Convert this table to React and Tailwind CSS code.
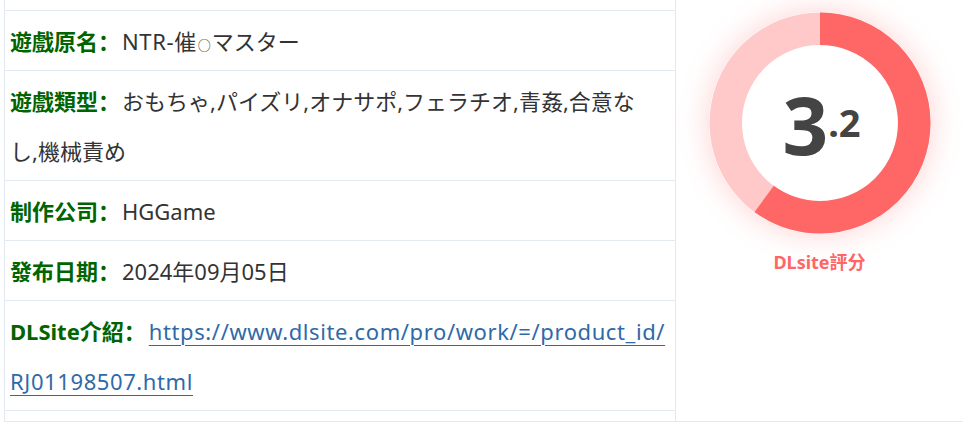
const FONT = { fontFamily: '"Noto Sans", "Noto Sans CJK SC", sans-serif' };

const rows = [
  { label: "遊戲原名：", value: ["NTR-催", "○", "マスター"], mixed: true },
  { label: "遊戲類型：", value: ["おもちゃ,パイズリ,オナサポ,フェラチオ,青姦,合意な", "し,機械責め"] },
  { label: "制作公司：", value: "HGGame" },
  { label: "發布日期：", value: "2024年09月05日" },
  {
    label: "DLSite介紹：",
    link: ["https://www.dlsite.com/pro/work/=/product_id/", "RJ01198507.html"],
  },
];

function ScoreRing({ percent }) {
  const r = 94.25;
  const c = 2 * Math.PI * r;
  return (
    <div className="rounded-full shadow-[0_0_30px_rgba(255,102,102,0.3)]">
      <svg width="222" height="222" viewBox="0 0 222 222" className="block">
        <circle cx="111" cy="111" r={r} fill="none" stroke="#ffc9c9" strokeWidth="32.5" />
        <circle
          cx="111"
          cy="111"
          r={r}
          fill="none"
          stroke="#ff6666"
          strokeWidth="32.5"
          strokeDasharray={c * percent + " " + c}
          transform="rotate(-90 111 111)"
        />
      </svg>
    </div>
  );
}

function Value({ row }) {
  if (row.link) {
    return (
      <a href="#" className="ml-[3px] text-[#2f6aa8] underline underline-offset-[5px] decoration-1 tracking-[0.6px]">
        {row.link[0]}
        <br />
        {row.link[1]}
      </a>
    );
  }
  if (row.mixed) {
    // the circle in the title is drawn small in the original
    return (
      <span className="ml-[2px]">
        <span className="tracking-[0.6px]">{row.value[0]}</span>
        <span className="text-[13px] leading-none px-[1px]">{row.value[1]}</span>
        {row.value[2]}
      </span>
    );
  }
  if (Array.isArray(row.value)) {
    return (
      <span className="ml-[2px]">
        {row.value[0]}
        <br />
        {row.value[1]}
      </span>
    );
  }
  return <span className="ml-[2px]">{row.value}</span>;
}

export default function App() {
  return (
    <div className="bg-white w-[963px] h-[425px] pl-[4px]" style={FONT}>
      <div className="flex border-l border-b border-[#e1eaf2]">
        <div className="w-[671px] border-r border-[#e1eaf2] pb-[10px]">
          <div className="h-[11px] border-b border-[#e1eaf2]" />
          {rows.map(function (row, i) {
            return (
              <div key={i} className="border-b border-[#e1eaf2] px-[5px] py-[4.5px] text-[22px] leading-[50px] text-[#333]">
                <span className="font-bold text-[#006400]">{row.label}</span>
                <Value row={row} />
              </div>
            );
          })}
        </div>
        <div className="flex-1 flex flex-col items-center pt-[12px]">
          <div className="relative">
            <ScoreRing percent={0.6} />
            <div className="absolute inset-0 flex items-center justify-center pl-[4px] pt-[2px] text-[#444] font-bold">
              <span className="text-[80px] leading-none">3</span>
              <span className="text-[38px] leading-none mt-[-4px]">.2</span>
            </div>
          </div>
          <div className="mt-[15px] text-[18px] font-bold text-[#ff6666]">DLsite評分</div>
        </div>
      </div>
    </div>
  );
}
